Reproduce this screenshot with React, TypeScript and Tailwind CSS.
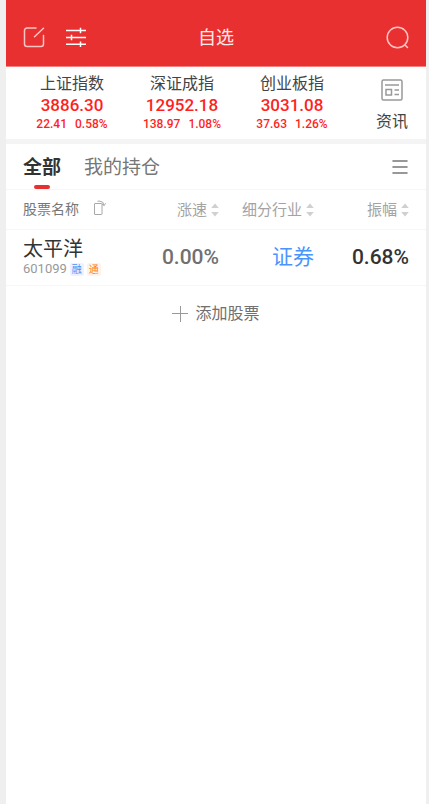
import { useState } from "react";

interface MarketIndex {
    name: string
    value: string
    change: string
    percent: string
}

interface Stock {
    name: string
    code: string
    speed: string
    industry: string
    amplitude: string
}

const indexes: MarketIndex[] = [
    { name: "上证指数", value: "3886.30", change: "22.41", percent: "0.58%" },
    { name: "深证成指", value: "12952.18", change: "138.97", percent: "1.08%" },
    { name: "创业板指", value: "3031.08", change: "37.63", percent: "1.26%" },
]

const stocks: Stock[] = [
    { name: "太平洋", code: "601099", speed: "0.00%", industry: "证券", amplitude: "0.68%" },
]

const tabs = ["全部", "我的持仓"]

function EditIcon() {
    return <svg width="24" height="24" viewBox="0 0 24 24" fill="none" stroke="#fbc4c4" strokeWidth="1.5" strokeLinecap="round">
        <path d="M14 2H5a2.5 2.5 0 0 0-2.5 2.5v13.5a2.5 2.5 0 0 0 2.5 2.5h14a2.5 2.5 0 0 0 2.5-2.5V9.5" />
        <path d="M12.5 10.8L21.5 2.2" />
    </svg>
}

function SlidersIcon() {
    return <svg width="24" height="24" viewBox="0 0 24 24" fill="none" stroke="#fff" strokeWidth="1.5">
        <path d="M2 4.5h20M2 11.5h20M2 18.2h20" />
        <path d="M16.5 1.8v5.4M7.5 8.8v5.4M16.5 15.5v5.4" />
    </svg>
}

function SearchIcon() {
    return <svg width="24" height="24" viewBox="0 0 24 24" fill="none" stroke="#fbc4c4" strokeWidth="1.5" strokeLinecap="round">
        <circle cx="11.5" cy="11.5" r="10.3" />
        <path d="M19 19l2.5 2.5" />
    </svg>
}

function NewsIcon() {
    return <svg width="22" height="22" viewBox="0 0 22 22" fill="none" stroke="#999" strokeWidth="1.5">
        <rect x="1" y="1" width="20" height="20" rx="1.5" />
        <path d="M4 6h14M13.5 11h4.5M13.5 15.5h4.5" />
        <rect x="5" y="10.5" width="5.5" height="5.5" />
    </svg>
}

function RotateIcon() {
    return <svg width="14" height="18" viewBox="0 0 14 18" fill="none" stroke="#a8a8a8" strokeWidth="1">
        <rect x="1.5" y="3.5" width="7.5" height="11" rx="0.5" />
        <path d="M4.5 1.2h2.5a4.3 4.3 0 0 1 4 4" />
        <path d="M9 4l2.2 1.6 1.3-2.3" />
    </svg>
}

function SortIcon() {
    return <svg width="8" height="14" viewBox="0 0 8 14" fill="#d0d0d0">
        <path d="M4 0.5L7.8 5H0.2zM4 13.5L0.2 9h7.6z" />
    </svg>
}

function SortButton({ label }: { label: string }) {
    return <button className="inline-flex items-center gap-1 align-middle text-[15px] leading-6 text-[#a3a3a3]">
        {label}
        <SortIcon />
    </button>
}

export default function App() {
    const [activeTab, setActiveTab] = useState(0)

    return <div className="min-h-screen bg-[#efefef] pr-[3px] pl-1.5 font-[Roboto,'Noto_Sans_CJK_SC',sans-serif]">
        <div className="min-h-screen bg-white">
            <header className="grid grid-cols-3 items-center border-b border-[#f58080] bg-[#e83030] px-4 pt-[26px] pb-4">
                <div className="flex gap-[18px]">
                    <button aria-label="编辑"><EditIcon /></button>
                    <button aria-label="设置"><SlidersIcon /></button>
                </div>
                <h1 className="text-center text-lg leading-6 text-[#fdeaea]">自选</h1>
                <button aria-label="搜索" className="justify-self-end"><SearchIcon /></button>
            </header>

            <section className="flex border-b-[5px] border-[#f4f4f4] py-1.5 pl-[11px]">
                {indexes.map((item) => <div key={item.name} className="flex-1 text-center text-[#ff1f1f]">
                    <div className="text-base leading-[22px] text-[#444]">{item.name}</div>
                    <div className="text-[17px] leading-5 font-medium">{item.value}</div>
                    <div className="flex justify-center gap-2 text-xs leading-[18px] font-medium">
                        <span>{item.change}</span>
                        <span>{item.percent}</span>
                    </div>
                </div>)}
                <button className="flex w-[79px] flex-col items-center justify-between pt-1.5 pl-[11px] text-base leading-[22px] text-[#444]">
                    <NewsIcon />
                    资讯
                </button>
            </section>

            <nav className="flex items-stretch gap-[23px] border-b border-[#f6f6f6] px-[17px]">
                {tabs.map((tab, index) => <button
                    key={tab}
                    onClick={() => setActiveTab(index)}
                    className={index === activeTab
                        ? "flex flex-col items-center text-[19px] font-bold text-[#333]"
                        : "flex flex-col items-center text-[19px] text-[#777]"}>
                    <span className="pt-2.5 pb-[3px] leading-7">{tab}</span>
                    {index === activeTab && <span className="h-1 w-4 rounded-full bg-[#e83030]" />}
                </button>)}
                <button aria-label="菜单" className="ml-auto">
                    <svg width="18" height="16" viewBox="0 0 18 16" stroke="#777" strokeWidth="1.6" strokeLinecap="round">
                        <path d="M2 2h14M2 8h14M2 14h14" />
                    </svg>
                </button>
            </nav>

            <table className="w-full table-fixed border-collapse">
                <colgroup>
                    <col />
                    <col className="w-1/4" />
                    <col className="w-[95px]" />
                    <col className="w-[112px]" />
                </colgroup>
                <thead>
                    <tr className="h-[39px] border-b border-[#f6f6f6]">
                        <th className="pl-[17px] text-left font-normal">
                            <div className="flex items-center gap-[14px] text-sm leading-6 text-[#777]">
                                股票名称
                                <button aria-label="切换"><RotateIcon /></button>
                            </div>
                        </th>
                        <th className="text-right font-normal"><SortButton label="涨速" /></th>
                        <th className="text-right font-normal"><SortButton label="细分行业" /></th>
                        <th className="pr-[17px] text-right font-normal"><SortButton label="振幅" /></th>
                    </tr>
                </thead>
                <tbody>
                    {stocks.map((s) => <tr key={s.code} className="h-14 border-b border-[#f6f6f6] text-right text-[21px] leading-7">
                        <td className="pl-[17px] text-left">
                            <div className="text-xl leading-6 text-[#333]">{s.name}</div>
                            <div className="flex items-center gap-[3px] text-[13px] leading-4 text-[#999]">
                                {s.code}
                                <span className="rounded-xs bg-[#eaf3ff] px-0.5 text-[10px] leading-[13px] text-[#4a90f5]">融</span>
                                <span className="rounded-xs bg-[#fff3e8] px-0.5 text-[10px] leading-[13px] text-[#ff7f1f]">通</span>
                            </div>
                        </td>
                        <td className="font-medium text-[#707070]">{s.speed}</td>
                        <td className="text-[#4a94ff]">{s.industry}</td>
                        <td className="pr-[17px] font-medium text-[#333]">{s.amplitude}</td>
                    </tr>)}
                </tbody>
            </table>

            <button className="flex w-full items-center justify-center gap-[7px] py-4 text-base leading-6 text-[#707070]">
                <svg width="16" height="16" viewBox="0 0 16 16" stroke="#999" strokeWidth="1">
                    <path d="M8.5 0v16M0 7.5h16" />
                </svg>
                添加股票
            </button>
        </div>
    </div>
}
